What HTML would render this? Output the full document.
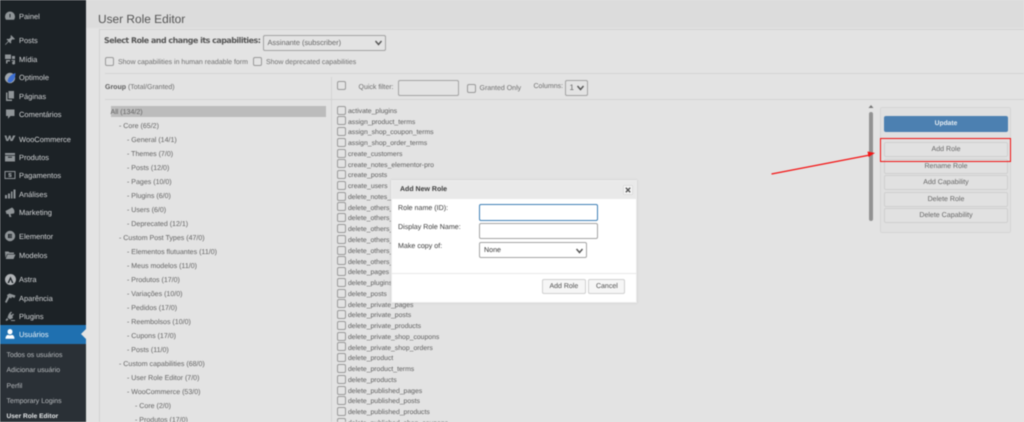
<!DOCTYPE html>
<html><head><meta charset="utf-8"><style>
*{box-sizing:border-box}
html,body{margin:0;padding:0;width:1024px;height:422px;overflow:hidden;background:#e3e3e3}
body{font-family:"Liberation Sans",sans-serif;position:relative;text-rendering:geometricPrecision}
#w{position:absolute;left:0;top:0;width:1024px;height:422px;overflow:hidden;filter:blur(.4px)}
.a{position:absolute;white-space:nowrap}
.m{position:absolute;left:19px;font-size:7.5px;line-height:13px;color:#d2d4d6;white-space:nowrap}
.s{position:absolute;left:6.5px;font-size:6.95px;line-height:13px;color:#b8bbbe;white-space:nowrap}
.i{position:absolute;left:4px;width:12px;height:12px;fill:#8f9497}
.g{position:absolute;font-size:7.05px;line-height:13.4px;color:#646464;white-space:nowrap}
.c{position:absolute;left:348px;font-size:6.85px;line-height:13.2px;color:#5e5e5e;white-space:nowrap}
.b{position:absolute;left:337.3px;width:9px;height:9px;border:1px solid #9a9a9a;border-radius:2px;background:#e3e3e3}
.k{position:absolute;width:9px;height:9px;border:1px solid #9a9a9a;border-radius:2px;background:#e3e3e3}
.btn{position:absolute;left:884px;width:124px;height:15px;border:1px solid #cfcfcf;border-radius:2px;background:#e1e1e1;color:#666;font-size:7.05px;line-height:13.6px;text-align:center}
.f{position:absolute;border:1px solid #a3a3a3;border-radius:2px;background:#e3e3e3}
.chev{position:absolute;width:9px;height:6px;fill:none;stroke:#555;stroke-width:1.4}
.l{position:absolute;font-size:7.1px;line-height:12px;color:#3a3a3a;white-space:nowrap}
</style></head><body><div id="w">
<div class="a" style="left:0;top:0;width:86px;height:422px;background:#1c2226"></div>
<div class="a" style="left:0;top:325px;width:86px;height:18.5px;background:#1f70b0"></div>
<div class="a" style="left:0;top:343.5px;width:86px;height:79px;background:#2a3036"></div>
<svg class="a" style="left:81px;top:329px" width="5" height="10"><path d="M5 0L0 5L5 10Z" fill="#e3e3e3"/></svg>

<svg class="i" style="top:9.500px" viewBox="0 0 12 12"><path d="M6 1.500A5 5 0 0 0 1 6.500C1 8 1.500 9 2 9.800H10C10.500 9 11 8 11 6.500A5 5 0 0 0 6 1.500ZM5.500 4H6.500L6.400 7.500H5.600Z"/></svg>
<svg class="i" style="top:34px" viewBox="0 0 12 12"><path d="M7 1L11 5L9.700 5.600L8.500 5.200L7 7L7.300 8.800L6.500 9.500L4.700 7.700L1.500 11L1 10.500L4.200 7L2.500 5.500L3.200 4.700L5 5L6.800 3.500L6.500 2.300Z"/></svg>
<svg class="i" style="top:52.500px" viewBox="0 0 12 12"><path d="M1 1.500H7V6H1ZM8 3H11V6H8ZM2 7H6V8.500H3.500V10.500H2ZM7.500 7H11V9.500A1.500 1.500 0 1 1 9.500 8.500V8H7.500Z"/></svg>
<svg class="i" style="top:70.500px;left:3.500px;width:13px;height:13px" viewBox="0 0 13 13"><circle cx="6" cy="7" r="5.200" fill="#9fa5aa"/><path d="M3.500 10C4.500 6 7 3.500 11.500 2C11.500 6 10 10 6.500 11.500C5 11.800 4 11 3.500 10Z" fill="#3d6fd2"/></svg>
<svg class="i" style="top:89.500px" viewBox="0 0 12 12"><path d="M2 2.500H3.500V9.500H8V11H2ZM4.500 1H10V8.500H4.500Z"/></svg>
<svg class="i" style="top:108px" viewBox="0 0 12 12"><path d="M2 1.500H10.500V8H6.500L4 10.800V8H2Z"/></svg>
<svg class="i" style="top:132px" viewBox="0 0 12 12"><path d="M.5 3.500H2.500L3.400 7.500L5 3.500H6.500L7.400 7.500L9 3.500H11.500L8.500 9H6.500L5.700 6L4.300 9H2.300Z"/></svg>
<svg class="i" style="top:150.500px" viewBox="0 0 12 12"><path d="M1 2H11V4H1ZM1 4.800H11V10.500H1ZM4 5.700V6.700H8V5.700Z"/></svg>
<svg class="i" style="top:169px" viewBox="0 0 12 12"><path fill-rule="evenodd" d="M.5 2H11.500V10H.5ZM1.500 3V9H10.500V3ZM4.500 4H7.500V5H5.500V5.500H7.500V8H4.500V7H6.500V6.500H4.500Z"/></svg>
<svg class="i" style="top:187.500px" viewBox="0 0 12 12"><path d="M1 7H3V10.500H1ZM4 5.500H6V10.500H4ZM7 3.500H8.500V10.500H7ZM9.500 1.500H11.500V10.500H9.500Z"/></svg>
<svg class="i" style="top:206px" viewBox="0 0 12 12"><path d="M1.500 5L8 1.500A4.500 4.500 0 0 1 10 7.500L6.500 8L7.500 11H5.500L4.500 8L2.500 8Z"/></svg>
<svg class="i" style="top:230px" viewBox="0 0 12 12"><path fill-rule="evenodd" d="M6 .8A5.200 5.200 0 1 0 6 11.200A5.200 5.200 0 1 0 6 .8ZM4 4H8V5H5V5.500H8V6.500H5V7H8V8H4Z"/></svg>
<svg class="i" style="top:248.500px" viewBox="0 0 12 12"><path d="M1 2.500H4.500L5.500 3.500H10V5H3L1.500 9ZM3.500 5.500H11.500L9.500 10H1.700Z"/></svg>
<svg class="i" style="top:272.500px;left:3.500px;width:13px;height:13px" viewBox="0 0 13 13"><path fill="#b0b3b6" fill-rule="evenodd" d="M6.500 1A5.500 5.500 0 1 0 6.500 12A5.500 5.500 0 1 0 6.500 1ZM6.500 3.500L9.500 10H8L6.500 6.500L5 10H3.500Z"/></svg>
<svg class="i" style="top:291.500px" viewBox="0 0 12 12"><path d="M5.500 1.500L11.500 3.500L10.500 6L8 5L7 6.500L5.500 5.500L2.500 11L1 10L3.500 4.500L3 3Z"/></svg>
<svg class="i" style="top:310px" viewBox="0 0 12 12"><path d="M7 1.500L8 2.500L6.500 4L7.500 5L9 3.500L10 4.500L8.500 6L9 8L6 9.500L3.500 7.500L4.500 4.500L5.500 3ZM3 8L4.500 9.500L2.500 11L1.500 10ZM7 10H11V11H7Z"/></svg>
<svg class="i" style="top:328px;fill:#fff" viewBox="0 0 12 12"><path d="M6 1A2.500 2.700 0 1 0 6 6.400A2.500 2.700 0 1 0 6 1ZM4 6.700C2.500 7.300 1.500 8.300 1.500 10.800H10.500C10.500 8.300 9.500 7.300 8 6.700C7 7.500 5 7.500 4 6.700Z"/></svg>

<div class="m" style="top:10px">Painel</div>
<div class="m" style="top:34px">Posts</div>
<div class="m" style="top:52.500px">Mídia</div>
<div class="m" style="top:71px">Optimole</div>
<div class="m" style="top:89.500px">Páginas</div>
<div class="m" style="top:108px">Comentários</div>
<div class="m" style="top:132.500px">WooCommerce</div>
<div class="m" style="top:150.500px">Produtos</div>
<div class="m" style="top:169px">Pagamentos</div>
<div class="m" style="top:187.500px">Análises</div>
<div class="m" style="top:206px">Marketing</div>
<div class="m" style="top:230px">Elementor</div>
<div class="m" style="top:248.500px">Modelos</div>
<div class="m" style="top:273px">Astra</div>
<div class="m" style="top:291.500px">Aparência</div>
<div class="m" style="top:310px">Plugins</div>
<div class="m" style="top:328px;color:#eef2f6">Usuários</div>
<div class="s" style="top:349px">Todos os usuários</div>
<div class="s" style="top:364px">Adicionar usuário</div>
<div class="s" style="top:379.500px">Perfil</div>
<div class="s" style="top:394.500px">Temporary Logins</div>
<div class="s" style="top:410px;color:#e6e8e9;font-weight:bold;font-size:6.600px">User Role Editor</div>

<div class="a" style="left:86px;top:0;width:938px;height:28px;background:#dcdcdc"></div>
<div class="a" style="left:98px;top:10px;font-size:11.900px;line-height:18px;color:#555">User Role Editor</div>
<div class="a" style="left:99px;top:28.500px;width:925px;height:394px;background:#e3e3e3;border:1px solid #d2d2d2;border-right:0;border-bottom:0"></div>
<div class="a" style="left:104px;top:35px;font-size:7.900px;line-height:12px;font-weight:bold;color:#555;font-family:'DejaVu Sans',sans-serif;letter-spacing:-.47px">Select Role and change its capabilities:</div>
<div class="f" style="left:262.700px;top:34.500px;width:123px;height:16.300px"></div>
<div class="a" style="left:267.500px;top:37px;font-size:7.400px;line-height:12px;color:#666">Assinante (subscriber)</div>
<svg class="chev" style="left:373.500px;top:39.500px" viewBox="0 0 9 6"><path d="M1.500 1L4.500 4.500L7.500 1"/></svg>
<div class="k" style="left:105.300px;top:57.300px"></div>
<div class="a" style="left:118px;top:57px;font-size:7px;line-height:12.500px;color:#707070">Show capabilities in human readable form</div>
<div class="k" style="left:253.300px;top:57.300px"></div>
<div class="a" style="left:266px;top:57px;font-size:6.950px;line-height:12.500px;color:#707070">Show deprecated capabilities</div>
<div class="a" style="left:105px;top:73px;width:919px;height:1px;background:#d3d3d3"></div>
<div class="a" style="left:105px;top:98.500px;width:919px;height:1px;background:#d3d3d3"></div>
<div class="a" style="left:331px;top:77px;width:1px;height:345px;background:#d3d3d3"></div>
<div class="a" style="left:105px;top:82px;font-size:7px;line-height:12.500px;color:#6e6e6e"><b style="color:#5e5e5e">Group</b> (Total/Granted)</div>
<div class="a" style="left:110.500px;top:106px;width:215.500px;height:11px;background:#bcbcbc"></div>

<div class="g" style="left:110.500px;top:106px">All (134/2)</div>
<div class="g" style="left:119px;top:120px">- Core (65/2)</div>
<div class="g" style="left:127px;top:134px">- General (14/1)</div>
<div class="g" style="left:127px;top:148px">- Themes (7/0)</div>
<div class="g" style="left:127px;top:162px">- Posts (12/0)</div>
<div class="g" style="left:127px;top:176px">- Pages (10/0)</div>
<div class="g" style="left:127px;top:190px">- Plugins (6/0)</div>
<div class="g" style="left:127px;top:204px">- Users (6/0)</div>
<div class="g" style="left:127px;top:218px">- Deprecated (12/1)</div>
<div class="g" style="left:119px;top:232px">- Custom Post Types (47/0)</div>
<div class="g" style="left:127px;top:246px">- Elementos flutuantes (11/0)</div>
<div class="g" style="left:127px;top:260px">- Meus modelos (11/0)</div>
<div class="g" style="left:127px;top:274px">- Produtos (17/0)</div>
<div class="g" style="left:127px;top:288px">- Variações (10/0)</div>
<div class="g" style="left:127px;top:302px">- Pedidos (17/0)</div>
<div class="g" style="left:127px;top:316px">- Reembolsos (10/0)</div>
<div class="g" style="left:127px;top:330px">- Cupons (17/0)</div>
<div class="g" style="left:127px;top:344px">- Posts (11/0)</div>
<div class="g" style="left:119px;top:358px">- Custom capabilities (68/0)</div>
<div class="g" style="left:127px;top:372px">- User Role Editor (7/0)</div>
<div class="g" style="left:127px;top:386px">- WooCommerce (53/0)</div>
<div class="g" style="left:135px;top:400px">- Core (2/0)</div>
<div class="g" style="left:135px;top:414px">- Produtos (17/0)</div>

<div class="k" style="left:337.300px;top:80.500px"></div>
<div class="a" style="left:358.500px;top:82px;font-size:7px;line-height:12.500px;color:#6e6e6e">Quick filter:</div>
<div class="f" style="left:398.300px;top:80px;width:60.500px;height:16px"></div>
<div class="k" style="left:466.500px;top:83.500px"></div>
<div class="a" style="left:479.500px;top:83px;font-size:7px;line-height:12.500px;color:#6e6e6e">Granted Only</div>
<div class="a" style="left:533.500px;top:81px;font-size:7px;line-height:12.500px;color:#6e6e6e">Columns:</div>
<div class="f" style="left:565px;top:80px;width:22.500px;height:16px"></div>
<div class="a" style="left:569.500px;top:82px;font-size:8px;line-height:12px;color:#666">1</div>
<svg class="chev" style="left:575.500px;top:85px" viewBox="0 0 9 6"><path d="M1.500 1L4.500 4.500L7.500 1"/></svg>

<div class="b" style="top:105.500px"></div><div class="c" style="top:104.700px">activate_plugins</div>
<div class="b" style="top:116.300px"></div><div class="c" style="top:115.500px">assign_product_terms</div>
<div class="b" style="top:127px"></div><div class="c" style="top:126.200px">assign_shop_coupon_terms</div>
<div class="b" style="top:137.800px"></div><div class="c" style="top:137px">assign_shop_order_terms</div>
<div class="b" style="top:148.600px"></div><div class="c" style="top:147.800px">create_customers</div>
<div class="b" style="top:159.400px"></div><div class="c" style="top:158.600px">create_notes_elementor-pro</div>
<div class="b" style="top:170.100px"></div><div class="c" style="top:169.300px">create_posts</div>
<div class="b" style="top:180.900px"></div><div class="c" style="top:180.100px">create_users</div>
<div class="b" style="top:191.700px"></div><div class="c" style="top:190.900px">delete_notes_elementor-pro</div>
<div class="b" style="top:202.400px"></div><div class="c" style="top:201.600px">delete_others_pages</div>
<div class="b" style="top:213.200px"></div><div class="c" style="top:212.400px">delete_others_posts</div>
<div class="b" style="top:224px"></div><div class="c" style="top:223.200px">delete_others_products</div>
<div class="b" style="top:234.700px"></div><div class="c" style="top:233.900px">delete_others_shop_coupons</div>
<div class="b" style="top:245.500px"></div><div class="c" style="top:244.700px">delete_others_shop_orders</div>
<div class="b" style="top:256.300px"></div><div class="c" style="top:255.500px">delete_others_users</div>
<div class="b" style="top:267px"></div><div class="c" style="top:266.200px">delete_pages</div>
<div class="b" style="top:277.800px"></div><div class="c" style="top:277px">delete_plugins</div>
<div class="b" style="top:288.600px"></div><div class="c" style="top:287.800px">delete_posts</div>
<div class="b" style="top:299.300px"></div><div class="c" style="top:298.500px">delete_private_pages</div>
<div class="b" style="top:310.100px"></div><div class="c" style="top:309.300px">delete_private_posts</div>
<div class="b" style="top:320.900px"></div><div class="c" style="top:320.100px">delete_private_products</div>
<div class="b" style="top:331.600px"></div><div class="c" style="top:330.800px">delete_private_shop_coupons</div>
<div class="b" style="top:342.400px"></div><div class="c" style="top:341.600px">delete_private_shop_orders</div>
<div class="b" style="top:353.200px"></div><div class="c" style="top:352.400px">delete_product</div>
<div class="b" style="top:363.900px"></div><div class="c" style="top:363.100px">delete_product_terms</div>
<div class="b" style="top:374.700px"></div><div class="c" style="top:373.900px">delete_products</div>
<div class="b" style="top:385.500px"></div><div class="c" style="top:384.700px">delete_published_pages</div>
<div class="b" style="top:396.200px"></div><div class="c" style="top:395.400px">delete_published_posts</div>
<div class="b" style="top:407px"></div><div class="c" style="top:406.200px">delete_published_products</div>
<div class="b" style="top:417.800px"></div><div class="c" style="top:417px">delete_published_shop_coupons</div>

<svg class="a" style="left:867px;top:104px" width="8" height="5"><path d="M1.500 4L4 1L6.500 4Z" fill="#777"/></svg>
<div class="a" style="left:868.700px;top:111.700px;width:4.700px;height:109.300px;background:#929292;border-radius:2px"></div>
<div class="a" style="left:880.300px;top:107.300px;width:130.500px;height:125.500px;background:#e0e0e0;border:1px solid #d6d6d6;border-radius:2px"></div>
<div class="btn" style="top:116px;height:16.300px;background:#4c80b1;border-color:#4c80b1;color:#e6edf3;font-weight:bold;line-height:14.200px;font-size:6.700px">Update</div>
<div class="btn" style="top:142px">Add Role</div>
<div class="btn" style="top:158.500px">Rename Role</div>
<div class="btn" style="top:175px">Add Capability</div>
<div class="btn" style="top:191.500px">Delete Role</div>
<div class="btn" style="top:208px">Delete Capability</div>
<div class="a" style="left:880.300px;top:138px;width:130.500px;height:24px;border:1.500px solid #f01010"></div>
<svg class="a" style="left:760px;top:140px" width="130" height="40"><path d="M11.500 34L110 15" stroke="#f41414" stroke-width="1.300" fill="none"/><path d="M115 13L107.500 11.500L108.500 17Z" fill="#f41414"/></svg>

<div class="a" style="left:391px;top:180px;width:245.500px;height:122.500px;background:#fff;border:1px solid #ececec;box-shadow:0 0 2px rgba(0,0,0,.15)"></div>
<div class="a" style="left:392px;top:181px;width:243.500px;height:18px;background:#e9e9e9"></div>
<div class="a" style="left:400px;top:183.500px;font-size:7px;line-height:12px;font-weight:bold;color:#3a3a3a">Add New Role</div>
<div class="a" style="left:622.700px;top:184.700px;width:10px;height:10.600px;background:#f5f5f5;border:1px solid #ddd;border-radius:1px"></div>
<svg class="a" style="left:624.700px;top:187px" width="6" height="6"><path d="M.8 .8L5.200 5.200M5.200 .8L.8 5.200" stroke="#555" stroke-width="1.400"/></svg>
<div class="l" style="left:398px;top:202.300px">Role name (ID):</div>
<div class="l" style="left:398px;top:221.300px">Display Role Name:</div>
<div class="l" style="left:398px;top:240px">Make copy of:</div>
<div class="a" style="left:479px;top:203.700px;width:119.300px;height:17px;background:#fff;border:1.500px solid #3f80b6;border-radius:2px"></div>
<div class="a" style="left:479px;top:223px;width:119.300px;height:16px;background:#fff;border:1px solid #a5a5a5;border-radius:2px"></div>
<div class="a" style="left:479px;top:241.700px;width:107.700px;height:16.300px;background:#fff;border:1px solid #a5a5a5;border-radius:2px"></div>
<div class="l" style="left:484px;top:243.500px">None</div>
<svg class="chev" style="left:575px;top:247.500px" viewBox="0 0 9 6"><path d="M1.500 1L4.500 4.500L7.500 1"/></svg>
<div class="a" style="left:392px;top:273px;width:243.500px;height:1px;background:#e8e8e8"></div>
<div class="a" style="left:541.700px;top:279.300px;width:44.300px;height:14.700px;background:#f6f6f6;border:1px solid #d0d0d0;border-radius:2px;font-size:7px;line-height:13.600px;text-align:center;color:#4c4c4c">Add Role</div>
<div class="a" style="left:588.300px;top:279.300px;width:37.200px;height:14.700px;background:#f6f6f6;border:1px solid #d0d0d0;border-radius:2px;font-size:7px;line-height:13.600px;text-align:center;color:#4c4c4c">Cancel</div>
</div></body></html>
